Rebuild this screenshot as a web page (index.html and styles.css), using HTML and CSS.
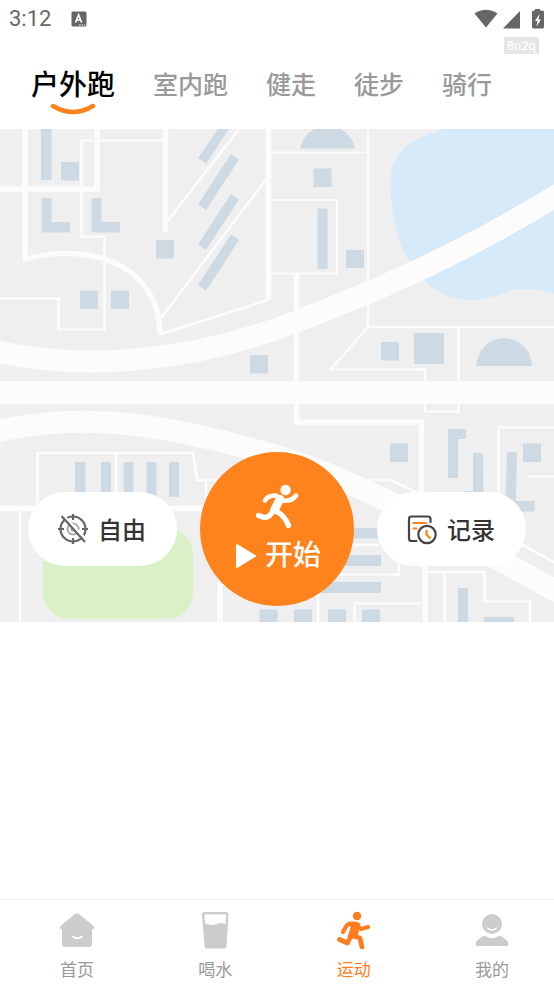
FILE: index.html
```html
<!DOCTYPE html>
<html lang="zh-CN">

<head>
    <meta charset="UTF-8">
    <meta name="viewport" content="width=device-width, initial-scale=1.0">
    <title>运动</title>
    <link rel="stylesheet" href="styles.css">
</head>

<body>
    <header class="status-bar">
        <span class="clock">3:12</span>
        <svg class="status-app" viewBox="0 0 16 16" width="16" height="16">
            <rect x="0.5" y="0.5" width="15" height="15" rx="1.5" fill="#666" />
            <path d="M4.6 11.5L7.6 3.8L10.6 11.5M5.7 9H9.5" fill="none" stroke="#fff" stroke-width="1.7" />
            <path d="M8 14h1.5M10.5 14H12M13 14h1.2" stroke="#fff" stroke-width="1.2" />
        </svg>
        <svg class="status-icons" viewBox="0 0 72 20" width="72" height="20">
            <path d="M0.5 4.5Q12 -3 23.5 4.5L12 18.5Z" fill="#666" />
            <path d="M29 19.5L46 2V19.5Z" fill="#666" />
            <path d="M61 1.5V0h5v1.5h2.5q1.5 0 1.5 1.5V18q0 1.5-1.5 1.5H59.5q-1.5 0-1.5-1.5V3q0-1.5 1.5-1.5Z" fill="#666" />
            <path d="M65.5 5L61 12h2.5L62.5 17.5L67 10.5H64.5Z" fill="#fff" />
        </svg>
    </header>

    <div class="tag-row"><span class="tag">8n2q</span></div>

    <nav class="tabs">
        <a href="#outdoor" class="tab active">户外跑
            <svg class="smile" viewBox="0 0 46 13" width="46" height="13">
                <path d="M3 3Q23 15 43 3" fill="none" stroke="#ff831d" stroke-width="4.5" stroke-linecap="round" />
            </svg>
        </a>
        <a href="#indoor" class="tab">室内跑</a>
        <a href="#walk" class="tab">健走</a>
        <a href="#hike" class="tab">徒步</a>
        <a href="#ride" class="tab">骑行</a>
    </nav>

    <main class="map">
        <svg class="map-art" viewBox="0 129 554 493">
            <rect y="129" width="554" height="493" fill="#efefef" />
            <!-- lake and park -->
            <path d="M443 129C410 139 390 153 390 184C391 210 396 240 407 257C422 282 440 299 470 300C495 300 505 289 523 289Q538 289 554 294V129Z" fill="#d7eafa" />
            <rect x="43" y="528" width="150" height="91" rx="26" fill="#daf0c6" />
            <!-- buildings -->
            <g fill="#cddae3">
                <path d="M41 129h10.5v51H41ZM61 162h18v18.5H61ZM41.5 198h10v24H70v10.5H41.5ZM91.5 198h10v24H120v10.5H91.5Z" />
                <path d="M156 240h18v18.5h-18ZM80 290.5h18V309H80ZM111 290.5h18V309h-18ZM250 355h18v18.5h-18Z" />
                <path d="M198 158L206 163.5L229 129H218ZM231 154L239 159.5L206 210L198 204.5ZM231 194L239 199.5L206 250L198 244.5ZM231 234.5L239 240L206 291L198 285Z" />
                <path d="M300 148.5A28 28 0 0 1 355 148.5ZM476.5 366A27.7 27.7 0 0 1 532 366Z" />
                <path d="M313.5 168.5h18V187h-18ZM317.5 208.5h10V269h-10ZM346 250h18v18h-18ZM381 342h18v18.5h-18ZM414 333h30v31h-30Z" />
                <path d="M390 443.5h18V462h-18ZM448 429h18v10h-8v39h-10ZM473 453h10L483.5 495H473ZM465 491h18v4h-18ZM507 452h10L516 501h18.5v10.5H505ZM523 443.5h18V462h-18Z" />
                <path d="M75 462h10.5v36H75ZM101 462h10v36h-10ZM123.5 462h10v36h-10ZM146.5 462h10v36h-10ZM169 462h10v35h-10Z" />
                <path d="M340 528h41v10.5h-41ZM335 555h46v11h-46ZM318 582h63v11h-63ZM458 588h10v34h-10ZM484 617h30v5h-30Z" />
                <path d="M259.5 609.5h18V622h-18ZM294 609.5h18V622h-18ZM328 609.5h18V622h-18ZM362 609.5h18V622h-18Z" />
            </g>
            <!-- small streets -->
            <g fill="none" stroke="#fcfcfc" stroke-width="2.6">
                <path d="M164 140.5H81.5V236.5H104.5V329.5H58.5V298.5H0" />
                <path d="M239 129L166 223M268 177L161 318M268 300L161 334" />
                <path d="M270 152.5H368M368 129V327M270 200H337V273.5H270" stroke-width="2.2" />
                <path d="M554 327H368L330 370M329 369.5H425V411.5H458.5V327" />
                <path d="M37.5 508V453H193L197 480H225M116 453V495M206 482V508M20 511V622" />
                <path d="M345 480H391L424 496M498.5 500V427.5H554M527 476.5H554M521 544L556 563" />
                <path d="M350 545H379M335 574.5H399V560M354.5 622V603.5H425M318 590V622M425 572H484.5V601.5H530V622M444.5 572V622" />
            </g>
            <!-- streets -->
            <g fill="none" stroke="#fcfcfc" stroke-width="5.3">
                <path d="M0 189H97V129M25 129V259C100 240 160 271 160 335" />
                <path d="M165.5 129V232M268.5 129V300M296.5 273V422H421.5V505M0 508.5H230M425 560V622M220 580V622" />
            </g>
            <!-- main roads -->
            <g fill="none" stroke="#fcfcfc" stroke-width="22">
                <path d="M-10 350C80 372 190 362 290 324C390 286 470 249 564 191" />
                <path d="M0 392.5H554" stroke-width="23" />
                <path d="M-10 433C90 408 180 428 280 457C360 480 470 545 564 595" />
            </g>
        </svg>

        <div class="actions">
            <button class="pill" type="button">
                <svg viewBox="0 0 32 32" width="32" height="32" fill="none" stroke="#666" stroke-width="2.2">
                    <circle cx="16" cy="16" r="12.5" />
                    <circle cx="16" cy="16" r="5.5" stroke="#aaa" stroke-width="2" />
                    <circle cx="16" cy="16" r="1.8" stroke="#aaa" stroke-width="1.5" />
                    <path d="M16 1V7M16 25V31M1 16H7M25 16H31" />
                    <path d="M6.5 2.5L29.5 27" stroke="#fff" stroke-width="2.5" />
                    <path d="M4.5 3L28 29" />
                </svg>
                <span>自由</span>
            </button>
            <button class="start" type="button">
                <svg viewBox="0 0 46 46" width="46" height="46" fill="none" stroke="#fff" stroke-linecap="round" stroke-linejoin="round">
                    <circle cx="31.5" cy="7" r="5.2" fill="#fff" stroke="none" />
                    <path d="M11 17.5Q14 12 22 12.5L29 17.5Q37 19 42 12.5" stroke-width="4.6" />
                    <path d="M26 16L20.5 27" stroke-width="8.5" />
                    <path d="M20 26Q16 35 10 34.5L4.5 32.5M22 28Q31 33 34.5 42.5" stroke-width="5.4" />
                </svg>
                <span class="start-label">
                    <svg viewBox="0 0 22 26" width="22" height="26">
                        <path d="M2 2L20 13L2 24Z" fill="#fff" stroke="#fff" stroke-width="2" stroke-linejoin="round" />
                    </svg>
                    开始
                </span>
            </button>
            <button class="pill" type="button">
                <svg viewBox="0 0 32 32" width="32" height="32" fill="none" stroke="#444" stroke-width="2.2" stroke-linecap="round">
                    <path d="M10.5 28H5.5Q3 28 3 25.5V6Q3 3.5 5.5 3.5H22Q24.5 3.5 24.5 6V9" />
                    <path d="M7.5 10H20M7.5 15.5H10.5" stroke="#ff831d" stroke-width="2" />
                    <circle cx="21" cy="21.5" r="8.7" />
                    <path d="M20.5 17.5V21.5L24 25" stroke="#ff831d" />
                </svg>
                <span>记录</span>
            </button>
        </div>
    </main>

    <nav class="bottom-nav">
        <a href="#home" class="nav-item">
            <svg viewBox="0 0 38 38" width="38" height="38">
                <path d="M17 3Q19 1.5 21 3L35 14.5Q37.5 18 34 18.5V33Q34 36 31 36H7Q4 36 4 33V18.5Q0.5 18 3 14.5Z" fill="#ccc" />
                <path d="M15 25.5Q19.5 29 24 25.5" fill="none" stroke="#fff" stroke-width="2" stroke-linecap="round" />
            </svg>
            首页
        </a>
        <a href="#water" class="nav-item">
            <svg viewBox="0 0 38 38" width="38" height="38">
                <path d="M8 1H30Q32.5 1 32.5 3.500L30.500 35Q30.500 37.500 28 37.500H11Q8.500 37.500 8.500 35L6 3.500Q6 1 8 1Z" fill="#ccc" />
                <path d="M8.500 3.500H30L29.500 13Q24 11 20.500 13Q15 15 9 12.500Z" fill="#fff" />
            </svg>
            喝水
        </a>
        <a href="#sport" class="nav-item current">
            <svg viewBox="0 0 38 38" width="38" height="38" fill="none" stroke="#ff7d1c" stroke-linecap="round" stroke-linejoin="round">
                <circle cx="22" cy="5" r="4.2" fill="#ff7d1c" stroke="none" />
                <path d="M8 21L12 14Q14 12 20 13L26 18L33 16" stroke-width="4.2" />
                <path d="M14 12Q20 9.500 25 13L22 26H13L16 17Z" fill="#ff7d1c" stroke-width="1" />
                <path d="M15.500 26L12.500 32L4.500 28.500M18 25L25 27L27 36" stroke-width="4.8" />
            </svg>
            运动
        </a>
        <a href="#mine" class="nav-item">
            <svg viewBox="0 0 38 38" width="38" height="38">
                <circle cx="19" cy="13" r="10" fill="#ccc" />
                <path d="M8.5 26Q11 24 14 26Q19 28.5 24 26Q27 24 29.5 26L34.5 30Q37 35 33.5 35H4.500Q1 35 3.5 30Z" fill="#ccc" />
                <path d="M14.5 17Q19 21 23.5 17" fill="none" stroke="#fff" stroke-width="1.6" stroke-linecap="round" />
            </svg>
            我的
        </a>
    </nav>
</body>

</html>
```
FILE: styles.css
```css
* {
    margin: 0;
    padding: 0;
    box-sizing: border-box;
    font-family: Roboto, "Noto Sans CJK SC", sans-serif;
}

body {
    display: flex;
    flex-direction: column;
    min-height: 100vh;
    background-color: #fff;
}

svg {
    display: block;
    flex-shrink: 0;
}

.status-bar {
    display: flex;
    align-items: center;
    height: 37px;
    padding: 0 8px 0 9px;
    color: #666;
}

.clock {
    font-size: 22px;
    line-height: 38px;
}

.status-app {
    margin-left: 20px;
}

.status-icons {
    margin-left: auto;
}

.tag-row {
    display: flex;
    justify-content: flex-end;
    padding-right: 15px;
}

.tag {
    padding: 0 3px;
    background-color: #e6e6e6;
    color: #fff;
    font-size: 13px;
    line-height: 17px;
}

.tabs {
    display: flex;
    gap: 38px;
    height: 75px;
    padding: 12px 31px 0;
    line-height: 40px;
    white-space: nowrap;
}

.tab {
    color: #999;
    font-size: 25px;
    font-weight: 500;
    text-decoration: none;
}

.tab.active {
    color: #000;
    font-size: 28px;
}

.smile {
    margin: -3px auto 0;
}

.map {
    position: relative;
}

.map-art {
    width: 100%;
}

/* buttons float over the map */
.actions {
    position: absolute;
    left: 0;
    right: 0;
    bottom: 16px;
    display: flex;
    justify-content: center;
    align-items: center;
    gap: 23px;
}

button {
    border: none;
    cursor: pointer;
    font-weight: 500;
}

.pill {
    display: flex;
    justify-content: center;
    align-items: center;
    gap: 9px;
    width: 149px;
    height: 74px;
    padding-right: 2px;
    border-radius: 37px;
    background-color: #fff;
    color: #333;
    font-size: 24px;
}

.pill span {
    padding-bottom: 2px;
}

.start {
    display: flex;
    flex-direction: column;
    align-items: center;
    gap: 6px;
    width: 154px;
    height: 154px;
    padding-top: 31px;
    border-radius: 50%;
    background-color: #ff831d;
    color: #fff;
}

.start-label {
    display: flex;
    align-items: center;
    gap: 8px;
    padding-left: 2px;
    font-size: 28px;
    line-height: 42px;
}

.bottom-nav {
    display: flex;
    justify-content: space-between;
    height: 86px;
    margin-top: auto;
    padding: 11px 43px 0 58px;
    border-top: 1px solid #eee;
}

.nav-item {
    display: flex;
    flex-direction: column;
    align-items: center;
    gap: 9px;
    color: #999;
    font-size: 17px;
    line-height: 24px;
    text-decoration: none;
}

.nav-item.current {
    color: #ff7d1c;
}
```
